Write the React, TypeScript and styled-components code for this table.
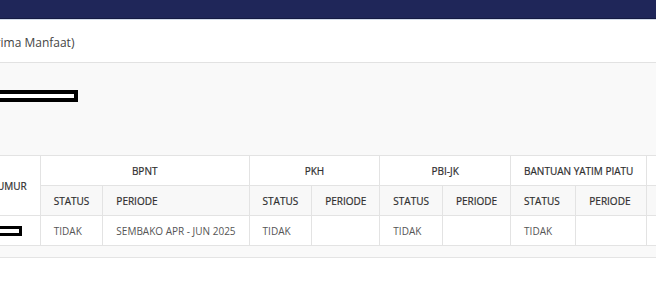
import { Fragment } from "react";
import styled, { createGlobalStyle } from "styled-components";

const GlobalStyle = createGlobalStyle`
  html, body {
    margin: 0;
    padding: 0;
    background: #fff;
  }
  body {
    font-family: "Open Sans", "Noto Sans", sans-serif;
    color: #444;
    overflow: hidden;
  }
`;

type Program = { name: string; status: string; periode: string };

const programs: Program[] = [
  { name: "BPNT", status: "TIDAK", periode: "SEMBAKO APR - JUN 2025" },
  { name: "PKH", status: "TIDAK", periode: "" },
  { name: "PBI-JK", status: "TIDAK", periode: "" },
  { name: "BANTUAN YATIM PIATU", status: "TIDAK", periode: "" },
  { name: "ATENSI", status: "TIDAK", periode: "" },
];

const App = () => {
  return (
    <>
      <GlobalStyle />
      <NavBar />
      <Viewport>
        <Shift>
          <CardHeader>
            <Title>(Penerima Manfaat)</Title>
          </CardHeader>
          <CardBody>
            <Redacted $width={118} />
            <Table>
              <thead>
                <tr>
                  <Th rowSpan={2}>UMUR</Th>
                  {programs.map((p) => (
                    <GroupTh key={p.name} colSpan={2}>
                      {p.name}
                    </GroupTh>
                  ))}
                </tr>
                <SubRow>
                  {programs.map((p) => (
                    <Fragment key={p.name}>
                      <Th>STATUS</Th>
                      <Th>PERIODE</Th>
                    </Fragment>
                  ))}
                </SubRow>
              </thead>
              <tbody>
                <tr>
                  <Td>
                    <Redacted $width={25} $small />
                  </Td>
                  {programs.map((p) => (
                    <Fragment key={p.name}>
                      <Td>{p.status}</Td>
                      <Td>{p.periode}</Td>
                    </Fragment>
                  ))}
                </tr>
              </tbody>
            </Table>
          </CardBody>
        </Shift>
      </Viewport>
    </>
  );
};

export default App;

const NavBar = styled.div`
  height: 18px;
  background: #1f2659;
  border-bottom: 1px solid #141a42;
`;

const Viewport = styled.div`
  width: 100%;
  overflow: hidden;
`;

const Shift = styled.div`
  margin-left: -60px;
  width: 1200px;
`;

const CardHeader = styled.div`
  height: 42px;
  display: flex;
  align-items: center;
  padding-left: 24px;
  border-top: 1px solid #d3dbe9;
  border-bottom: 1px solid #e2e2e2;
  box-shadow: 0 1px 1px rgba(0, 0, 0, 0.04);
`;

const Title = styled.span`
  font-size: 12px;
  color: #444;
  padding-top: 2px;
`;

const CardBody = styled.div`
  background: #f9f9f9;
  padding: 27px 0 11px 20px;
  border-bottom: 1px solid #e4e4e4;
`;

const Redacted = styled.div<{ $width: number; $small?: boolean }>`
  width: ${(p) => p.$width}px;
  height: ${(p) => (p.$small ? 10 : 12)}px;
  box-sizing: border-box;
  border: ${(p) => (p.$small ? 3 : 4)}px solid #000;
  background: #fff;
  margin-bottom: ${(p) => (p.$small ? 0 : 53)}px;
`;

const Table = styled.table`
  margin-left: 23px;
  border-collapse: collapse;
  background: #fff;
  font-size: 10px;
  white-space: nowrap;

  th,
  td {
    border: 1px solid #e3e3e3;
    height: 30px;
    box-sizing: border-box;
    padding: 0 13px;
    text-align: left;
  }
`;

const SubRow = styled.tr`
  background: #f8f8f8;
`;

const Th = styled.th`
  font-weight: 400;
  color: #2f2f2f;
  -webkit-text-stroke: 0.2px #2f2f2f;
`;

const GroupTh = styled(Th)`
  && {
    text-align: center;
  }
`;

const Td = styled.td`
  color: #555;
`;
